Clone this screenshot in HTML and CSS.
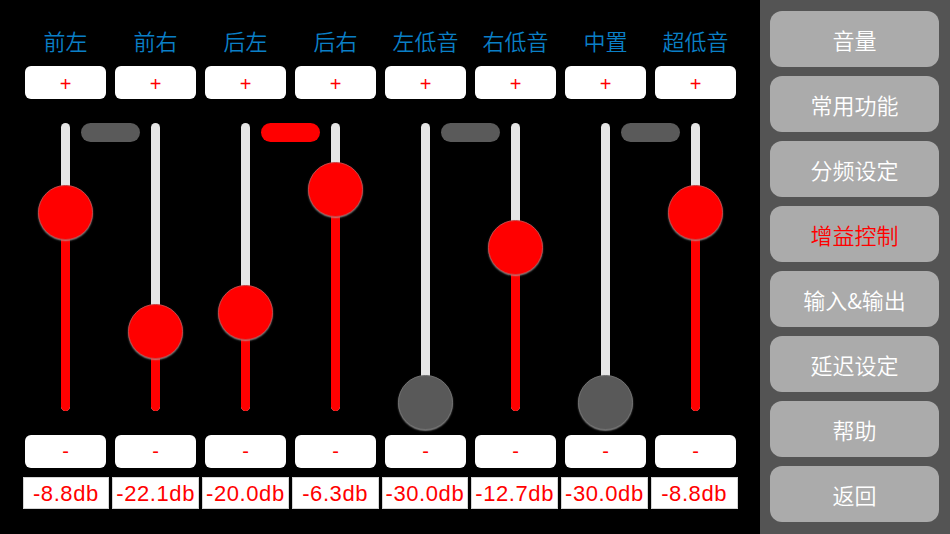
FILE: index.html
```html
<!DOCTYPE html>
<html lang="zh-CN">
<head>
  <meta charset="UTF-8">
  <meta name="viewport" content="width=device-width, initial-scale=1.0">
  <title>增益控制</title>
  <link rel="stylesheet" href="styles.css">
</head>
<body>
  <div class="app">
    <div class="main">
      <div class="row labels">
        <div>前左</div><div>前右</div><div>后左</div><div>后右</div>
        <div>左低音</div><div>右低音</div><div>中置</div><div>超低音</div>
      </div>

      <div class="row btns plus">
        <button>+</button><button>+</button><button>+</button><button>+</button>
        <button>+</button><button>+</button><button>+</button><button>+</button>
      </div>

      <div class="row sliders">
        <div class="cell">
          <div class="track"><div class="fill" style="height:199px"></div></div>
          <div class="knob" style="top:85.5px"></div>
          <div class="link"></div>
        </div>
        <div class="cell">
          <div class="track"><div class="fill" style="height:80px"></div></div>
          <div class="knob" style="top:204.7px"></div>
        </div>
        <div class="cell">
          <div class="track"><div class="fill" style="height:98.6px"></div></div>
          <div class="knob" style="top:185.9px"></div>
          <div class="link on"></div>
        </div>
        <div class="cell">
          <div class="track"><div class="fill" style="height:221.4px"></div></div>
          <div class="knob" style="top:63.1px"></div>
        </div>
        <div class="cell">
          <div class="track"><div class="fill" style="height:9px"></div></div>
          <div class="knob off" style="top:275.5px"></div>
          <div class="link"></div>
        </div>
        <div class="cell">
          <div class="track"><div class="fill" style="height:164px"></div></div>
          <div class="knob" style="top:120.5px"></div>
        </div>
        <div class="cell">
          <div class="track"><div class="fill" style="height:9px"></div></div>
          <div class="knob off" style="top:275.5px"></div>
          <div class="link"></div>
        </div>
        <div class="cell">
          <div class="track"><div class="fill" style="height:199px"></div></div>
          <div class="knob" style="top:85.5px"></div>
        </div>
      </div>

      <div class="row btns minus">
        <button>-</button><button>-</button><button>-</button><button>-</button>
        <button>-</button><button>-</button><button>-</button><button>-</button>
      </div>

      <div class="values">
        <div>-8.8db</div><div>-22.1db</div><div>-20.0db</div><div>-6.3db</div>
        <div>-30.0db</div><div>-12.7db</div><div>-30.0db</div><div>-8.8db</div>
      </div>
    </div>

    <div class="side">
      <button>音量</button>
      <button>常用功能</button>
      <button>分频设定</button>
      <button class="active">增益控制</button>
      <button>输入&amp;输出</button>
      <button>延迟设定</button>
      <button>帮助</button>
      <button>返回</button>
    </div>
  </div>
</body>
</html>
```

FILE: styles.css
```css
body {
  margin: 0;
  background: #000;
  font-family: "Liberation Sans", "Noto Sans CJK SC", sans-serif;
}
.app {
  display: flex;
  width: 950px;
  height: 534px;
}
.main {
  width: 760px;
  background: #000;
}
.row {
  display: grid;
  grid-template-columns: repeat(8, 81px);
  column-gap: 9px;
  padding-left: 25px;
}
.labels {
  margin-top: 24px;
  height: 35px;
}
.labels div {
  text-align: center;
  line-height: 33px;
  font-size: 22px;
  font-weight: 350;
  color: #0a7fc6;
  font-family: "Noto Sans CJK SC", sans-serif;
}
.btns button {
  height: 33px;
  padding: 0;
  border: none;
  border-radius: 6px;
  background: #fff;
  color: #ff0000;
  font-family: "Liberation Sans", sans-serif;
  font-size: 20px;
}
.plus {
  margin-top: 7px;
}
.plus button {
  padding-top: 4px;
}
.sliders {
  height: 336px;
}
.cell {
  position: relative;
}
.track {
  position: relative;
  width: 9px;
  height: 288px;
  margin: 24px auto 0;
  border-radius: 4.5px;
  background: #e6e6e6;
  overflow: hidden;
}
.fill {
  position: absolute;
  left: 0;
  bottom: 0;
  width: 100%;
  background: #ff0000;
}
.knob {
  position: absolute;
  left: 13px;
  width: 55px;
  height: 55px;
  box-sizing: border-box;
  border-radius: 50%;
  background: #ff0000;
  border: 1px solid #c44;
  box-shadow: 0 1px 1.5px rgba(170, 170, 170, 0.7);
}
.knob.off {
  background: #595959;
  border-color: #707070;
}
.link {
  position: absolute;
  top: 24px;
  left: 56px;
  width: 59px;
  height: 19px;
  border-radius: 10px;
  background: #5a5a5a;
  z-index: 2;
}
.link.on {
  background: #ff0000;
}
.values {
  display: grid;
  grid-template-columns: repeat(8, 1fr);
  column-gap: 3px;
  width: 715px;
  margin: 9px 0 0 22.5px;
}
.values div {
  height: 32px;
  box-sizing: border-box;
  border: 1px solid #d4d4d4;
  background: #fff;
  color: #ff0000;
  text-align: center;
  line-height: 31px;
  font-size: 22px;
  letter-spacing: 0.6px;
}
.side {
  width: 190px;
  box-sizing: border-box;
  background: #545454;
  padding: 11px 11px 12px 10px;
  display: flex;
  flex-direction: column;
  gap: 9px;
}
.side button {
  flex: 1;
  border: none;
  border-radius: 12px;
  background: #ababab;
  color: #fff;
  font-family: "Noto Sans CJK SC", sans-serif;
  font-size: 22px;
  font-weight: 350;
}
.side button.active {
  color: #ff0000;
}
```
